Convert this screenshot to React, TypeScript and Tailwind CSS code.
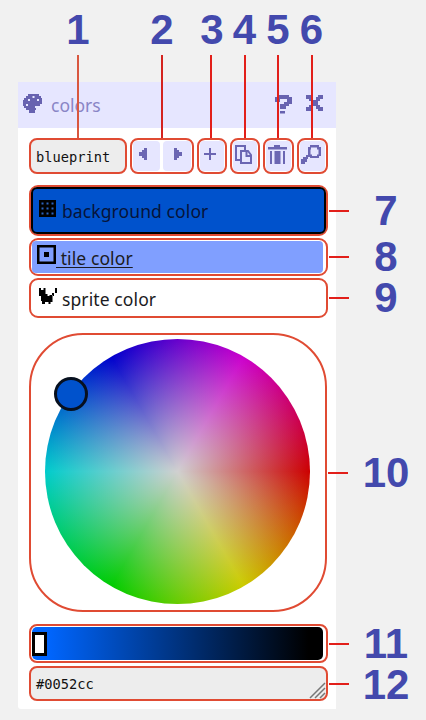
import type { ReactNode } from "react";

const outline = "relative border-2 border-[#e04b33] shrink-0";

function Glyph({ d, box, className }: { d: string; box: string; className: string }) {
  return (
    <svg className={className} viewBox={box} fill="currentColor" fillRule="evenodd">
      <path d={d} />
    </svg>
  );
}

const palette =
  "M5 0h11v2h2v2h1v6h-2v2h-5v2h1v2h-1v3H6v-3H3v-2H1v-2H0V6h1V4h2V2h2zM9.500 2v2h2V2zM5 5v2h2V5zM14 5v2h2V5zM3 10v2h2v-2z";
const question = "M3 0h11v2h3v7h-3v2h-3v3H5V9h4V7h3V4H5v3H0V2h3zM5 16h5v2.500H5z";
const cross = "M0 0h5v2h2v3h3V2h2V0h5v4h-3v2h-2v4h2v2h3v4h-5v-2h-2v-3H7v3H5v2H0v-4h3v-2h2V6H3V4H0z";
const cat =
  "M0 0h2v2h2.500V0h2v6h2v2h2V7h3v7h-2v2h-2v-2H6v2H3v-3H2V8H0zM13 5h2v3h-2zM16 0h2v5h-2z";

function Tool({ children, className }: { children: ReactNode; className: string }) {
  return (
    <div className={`${outline} h-9 rounded-[8px] bg-white p-px ${className}`}>
      <div className="h-full rounded-[4px] bg-[#e6e6ff] text-[#6b66b3]">{children}</div>
    </div>
  );
}

function Lead() {
  return <i className="absolute top-1/2 left-full ml-[3px] h-[2px] w-5 -translate-y-1/2 bg-[#e21f1a]" />;
}

function Drop({ className }: { className: string }) {
  return <i className={`absolute top-[55px] h-[83px] w-[2px] ${className}`} />;
}

export default function App() {
  return (
    <div className="relative h-[720px] w-[426px] overflow-hidden bg-[#f1f1f1] font-['Noto_Sans',sans-serif]">
      <div className="flex h-[82px] pt-[6px] pl-9 font-['Liberation_Sans',sans-serif] text-[42px] leading-[48px] font-bold text-[#4349ad]">
        <span className="flex w-[84px] justify-center">1</span>
        <span className="flex w-[84px] justify-center">2</span>
        <span className="flex w-[16px] justify-center">3</span>
        <span className="flex w-[49px] justify-center">4</span>
        <span className="flex w-[18px] justify-center">5</span>
        <span className="flex w-[49px] justify-center">6</span>
      </div>

      <div className="flex">
        <main className="ml-[18px] h-[627px] w-[318px] rounded-bl-[3px] bg-white">
          <header className="flex h-[46px] items-center bg-[#e6e6ff] text-[#6762b0]">
            <Glyph d={palette} box="0 0 19 19" className="-mt-[3px] ml-[5px] h-[19px] w-[19px]" />
            <h1 className="ml-[9px] w-[52px] text-[17.5px] leading-6 text-[#8985c6]">colors</h1>
            <Glyph d={question} box="0 0 17 19" className="-mt-[2px] ml-[172px] h-[19px] w-[17px]" />
            <Glyph d={cross} box="0 0 17 16" className="-mt-[5px] ml-[14px] h-[16px] w-[17px]" />
          </header>

          <div className="flex pt-[10px] pl-[11px]">
            <div className={`${outline} flex h-9 w-[98px] items-center rounded-[8px] bg-[#ededed] pt-[3px] pl-[5px] font-['DejaVu_Sans_Mono',monospace] text-[13.7px] text-[#111]`}>
              blueprint
            </div>
            <div className={`${outline} ml-[3px] flex h-9 w-[64px] justify-between rounded-[8px] bg-white p-px text-[#6b66b3]`}>
              <div className="w-[27px] rounded-[4px] bg-[#e6e6ff] pt-[7px] pl-[6px]">
                <Glyph d="M5 0h3v12H5v-2H3V8H0V4h3V2h2z" box="0 0 8 12" className="h-[12px] w-[8px]" />
              </div>
              <div className="w-[28px] rounded-[4px] bg-[#e6e6ff] pt-[7px] pl-[11px]">
                <Glyph d="M0 0h3v2h2v2h3v4H5v2H3v2H0z" box="0 0 8 12" className="h-[12px] w-[8px]" />
              </div>
            </div>
            <Tool className="ml-[3px] w-[30px]">
              <svg className="h-full w-full" viewBox="0 0 24 30" fill="currentColor">
                <path d="M4 12h12v2H4zM9 7h2v12H9z" />
              </svg>
            </Tool>
            <Tool className="ml-[3px] w-[30px]">
              <svg className="h-full w-full" viewBox="0 0 24 30" fill="none" stroke="currentColor" strokeWidth="2">
                <path d="M8 19H3V5h9v4M8 10h7l3 4v8H8zM13.500 10v5h5" />
              </svg>
            </Tool>
            <Tool className="ml-[3px] w-[31px]">
              <svg className="h-full w-full" viewBox="0 0 25 30" fill="currentColor">
                <path d="M8 4h6v2h7v2.500H2V6h6zM4 10h2v13H4zM8.500 10h6v13h-6zM17 10h2v13h-2z" />
              </svg>
            </Tool>
            <Tool className="ml-[3px] w-[31px]">
              <svg className="h-full w-full" viewBox="0 0 25 30" fill="currentColor">
                <path
                  fillRule="evenodd"
                  d="M10 4h9v2h2v9h-2v2h-9v-1H8v2H7v3H5v2H1v-5h2v-2h3v-2h2V6h2zM11 6.500v2h-.5v5H12v1.500h5v-1.500h1.500v-5H17v-2z"
                />
              </svg>
            </Tool>
          </div>

          <section className="ml-[11px] w-[299px] text-[17.5px] text-[#1b1b22]">
            <div className={`${outline} mt-[11px] h-[51px] rounded-[9px] bg-white`}>
              <div className="flex h-full items-center rounded-[6px] border-2 border-black bg-[#0052cc] pl-[6px] text-[#06143a]">
                <svg className="-mt-[5px] h-[17px] w-[17px] text-black" viewBox="0 0 17 17">
                  <path fill="currentColor" d="M0 0h17v17H0z" />
                  <path
                    fill="#2a62bd"
                    d="M2.500 2.500h2v2h-2zM7.500 2.500h2v2h-2zM12.500 2.500h2v2h-2zM2.500 7.500h2v2h-2zM7.500 7.500h2v2h-2zM12.500 7.500h2v2h-2zM2.500 12.500h2v2h-2zM7.500 12.500h2v2h-2zM12.500 12.500h2v2h-2z"
                  />
                </svg>
                <span className="mt-[1px] ml-[6px] tracking-[0.1px] whitespace-nowrap">background color</span>
              </div>
              <Lead />
            </div>
            <div className={`${outline} mt-[2px] h-[38px] rounded-[9px] bg-white p-px`}>
              <div className="flex h-full w-[291px] rounded-[4px] bg-[#809fff] pl-[5px]">
                <svg className="mt-1 h-[19px] w-[19px]" viewBox="0 0 19 19">
                  <path fill="none" stroke="#000" strokeWidth="2.500" d="M1.250 1.250h16.500v16.500h-16.500z" />
                  <path d="M7 7h5v5H7z" />
                </svg>
                <span className="mt-[5px] leading-6 tracking-[0.1px] whitespace-pre underline decoration-1 underline-offset-2"> tile color</span>
              </div>
              <Lead />
            </div>
            <div className={`${outline} mt-[2px] flex h-[40px] rounded-[9px] bg-white pl-[8px]`}>
              <Glyph d={cat} box="0 0 18 16" className="mt-[8px] h-[16px] w-[18px] text-black" />
              <span className="mt-[7px] ml-[5px] leading-6 tracking-[0.1px]">sprite color</span>
              <Lead />
            </div>

            <div className={`${outline} mt-[15px] h-[279px] w-[298px] rounded-[54px] pt-[4px] pl-[14px]`}>
              <div className="h-[265px] w-[265px] rounded-full bg-[radial-gradient(circle_closest-side,#d0d0d0,#d0d0d000),conic-gradient(from_90deg,#cc0000,#cccc00,#00cc00,#00cccc,#0000cc,#cc00cc,#cc0000)]" />
              <div className="absolute top-[42px] left-[23px] h-[34px] w-[34px] rounded-full border-[3px] border-[#07101f] bg-[#0052cc]" />
              <Lead />
            </div>

            <div className={`${outline} mt-[12px] h-[39px] rounded-[8px] bg-white p-px`}>
              <div className="flex h-full w-[291px] items-center rounded-[5px] bg-[linear-gradient(90deg,#0066ff_5%,#000_95%)]">
                <div className="h-[24px] w-[15px] border-[3px] border-black bg-white" />
              </div>
              <Lead />
            </div>
            <div className={`${outline} mt-[3px] flex h-[35px] items-center rounded-[8px] bg-[#ededed] pt-[2px] pl-[5px] font-['DejaVu_Sans_Mono',monospace] text-[13.7px] text-[#111]`}>
              #0052cc
              <svg className="absolute right-0 bottom-0 h-[17px] w-[17px]" viewBox="0 0 17 17" fill="none" stroke="#777" strokeWidth="1.5">
                <path d="M1 16L16 1M6 16L16 6M11 16l5-5" />
              </svg>
              <Lead />
            </div>
          </section>
        </main>

        <aside className="flex w-[90px] flex-col pt-[106px] pl-[10px] font-['Liberation_Sans',sans-serif] text-[42px] leading-[36px] font-bold text-[#4349ad]">
          <span className="flex h-[46px] items-center justify-center">7</span>
          <span className="flex h-[46px] items-center justify-center">8</span>
          <span className="flex h-[36px] items-center justify-center">9</span>
          <span className="flex h-[314px] items-center justify-center">10</span>
          <span className="flex h-[28px] items-center justify-center">11</span>
          <span className="flex h-[53px] items-center justify-center">12</span>
        </aside>
      </div>

      <Drop className="left-[77px] bg-[#d9573f]" />
      <Drop className="left-[161px] bg-[#d4231f]" />
      <Drop className="left-[210px] bg-[#e21f1a]" />
      <Drop className="left-[244px] bg-[#e21f1a]" />
      <Drop className="left-[277px] bg-[#e21f1a]" />
      <Drop className="left-[311px] bg-[#e21f1a]" />
    </div>
  );
}
